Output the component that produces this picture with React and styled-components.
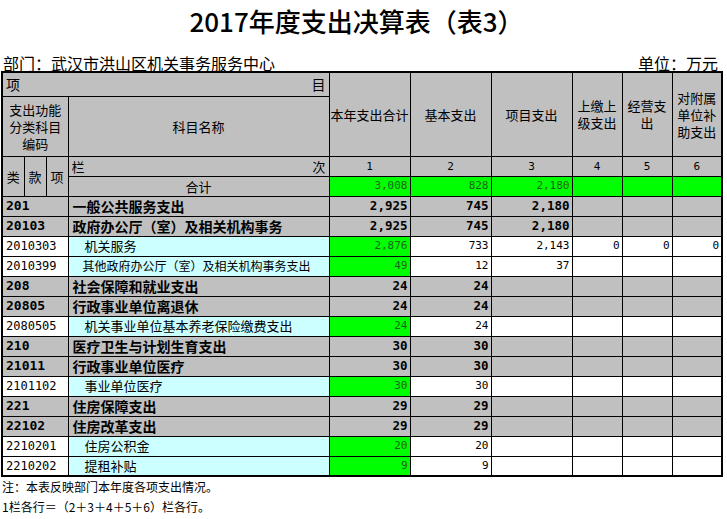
import React from 'react';
import styled, { createGlobalStyle } from 'styled-components';

const GRAY = '#c0c0c0';
const GREEN = '#00ff00';
const CYAN = '#ccffff';
const WHITE = '#ffffff';
const DARK_GREEN = '#1f5f1f';

const GlobalStyle = createGlobalStyle`
  body {
    margin: 0;
    background: #fff;
    color: #000;
    font-family: "Noto Sans CJK SC", sans-serif;
  }
`;

const Page = styled.div`
  width: 727px;
  padding-left: 1px;
`;

const Title = styled.h1`
  margin: 0;
  width: 711px;
  height: 42px;
  line-height: 42px;
  text-align: center;
  font-family: "Noto Sans CJK SC", sans-serif;
  font-size: 26px;
  font-weight: 500;
`;

const InfoRow = styled.div`
  display: flex;
  justify-content: space-between;
  align-items: flex-end;
  width: 717px;
  height: 29px;
  padding-left: 2px;
  box-sizing: border-box;
  font-size: 16px;
  line-height: 16px;
`;

const Sheet = styled.table`
  border-collapse: collapse;
  table-layout: fixed;
  width: 720px;
  border: 2px solid #000;
`;

const Row = styled.tr`
  height: ${(p) => p.$h || 20}px;
`;

const HeadCell = styled.td`
  border: 1px solid #000;
  background: ${GRAY};
  padding: 0;
  text-align: center;
  vertical-align: middle;
  white-space: nowrap;
  font-size: ${(p) => p.$size || 13}px;
  line-height: 17px;
  font-family: ${(p) => (p.$mono ? '"DejaVu Sans Mono", monospace' : '"Noto Sans CJK SC", sans-serif')};
  ${(p) => p.$mono && 'font-size: 11px;'}
`;

const Split = styled.div`
  display: flex;
  justify-content: space-between;
  padding: 0 3px 0 3px;
`;

const CodeCell = styled.td`
  border: 1px solid #000;
  background: ${(p) => (p.$bold ? GRAY : WHITE)};
  padding: 0 0 0 3px;
  white-space: nowrap;
  font-family: "DejaVu Sans Mono", monospace;
  font-size: ${(p) => (p.$bold ? 13 : 12)}px;
  font-weight: ${(p) => (p.$bold ? 700 : 400)};
  line-height: 18px;
`;

const NameCell = styled.td`
  border: 1px solid #000;
  background: ${(p) => (p.$bold ? GRAY : CYAN)};
  padding: 0 0 0 ${(p) => (p.$bold ? 4 : p.$indent || 16)}px;
  white-space: nowrap;
  overflow: hidden;
  font-size: ${(p) => p.$size || (p.$bold ? 14 : 13)}px;
  font-weight: ${(p) => (p.$bold ? 700 : 400)};
  line-height: 18px;
`;

const NumCell = styled.td`
  border: 1px solid #000;
  background: ${(p) => p.$bg};
  color: ${(p) => p.$color || '#000'};
  padding: 0 2px 0 0;
  text-align: right;
  white-space: nowrap;
  font-family: "DejaVu Sans Mono", monospace;
  font-size: ${(p) => (p.$bold ? 12.5 : 11)}px;
  font-weight: ${(p) => (p.$bold ? 700 : 400)};
  line-height: 18px;
`;

const Notes = styled.div`
  padding-left: 1px;
  font-size: 12px;
  line-height: 20px;
`;

const widths = [22, 22, 22, 261, 81, 81, 81, 50, 50, 50];

const rows = [
  { code: '201', name: '一般公共服务支出', top: true, v: ['2,925', '745', '2,180', '', '', ''] },
  { code: '20103', name: '政府办公厅（室）及相关机构事务', top: true, v: ['2,925', '745', '2,180', '', '', ''] },
  { code: '2010303', name: '机关服务', v: ['2,876', '733', '2,143', '0', '0', '0'] },
  { code: '2010399', name: '其他政府办公厅（室）及相关机构事务支出', size: 12, indent: 14, v: ['49', '12', '37', '', '', ''] },
  { code: '208', name: '社会保障和就业支出', top: true, v: ['24', '24', '', '', '', ''] },
  { code: '20805', name: '行政事业单位离退休', top: true, v: ['24', '24', '', '', '', ''] },
  { code: '2080505', name: '机关事业单位基本养老保险缴费支出', v: ['24', '24', '', '', '', ''] },
  { code: '210', name: '医疗卫生与计划生育支出', top: true, v: ['30', '30', '', '', '', ''] },
  { code: '21011', name: '行政事业单位医疗', top: true, v: ['30', '30', '', '', '', ''] },
  { code: '2101102', name: '事业单位医疗', v: ['30', '30', '', '', '', ''] },
  { code: '221', name: '住房保障支出', top: true, v: ['29', '29', '', '', '', ''] },
  { code: '22102', name: '住房改革支出', top: true, v: ['29', '29', '', '', '', ''] },
  { code: '2210201', name: '住房公积金', v: ['20', '20', '', '', '', ''] },
  { code: '2210202', name: '提租补贴', v: ['9', '9', '', '', '', ''] },
];

const totals = ['3,008', '828', '2,180', '', '', ''];

const cellBg = (row, i) => {
  if (row.top) return GRAY;
  return i === 0 ? GREEN : WHITE;
};

const App = () => {
  return (
    <Page>
      <GlobalStyle />
      <Title>2017年度支出决算表（表3）</Title>
      <InfoRow>
        <span>部门：武汉市洪山区机关事务服务中心</span>
        <span>单位：万元</span>
      </InfoRow>
      <Sheet>
        <colgroup>
          {widths.map((w, i) => (
            <col key={i} style={{ width: w }} />
          ))}
        </colgroup>
        <tbody>
          <Row $h={24}>
            <HeadCell colSpan={4} $size={14}>
              <Split>
                <span>项</span>
                <span>目</span>
              </Split>
            </HeadCell>
            <HeadCell rowSpan={2}>本年支出合计</HeadCell>
            <HeadCell rowSpan={2}>基本支出</HeadCell>
            <HeadCell rowSpan={2}>项目支出</HeadCell>
            <HeadCell rowSpan={2}>上缴上<br />级支出</HeadCell>
            <HeadCell rowSpan={2}>经营支<br />出</HeadCell>
            <HeadCell rowSpan={2}>对附属<br />单位补<br />助支出</HeadCell>
          </Row>
          <Row $h={60}>
            <HeadCell colSpan={3}>支出功能<br />分类科目<br />编码</HeadCell>
            <HeadCell>科目名称</HeadCell>
          </Row>
          <Row>
            <HeadCell rowSpan={2}>类</HeadCell>
            <HeadCell rowSpan={2}>款</HeadCell>
            <HeadCell rowSpan={2}>项</HeadCell>
            <HeadCell>
              <Split>
                <span>栏</span>
                <span>次</span>
              </Split>
            </HeadCell>
            {[1, 2, 3, 4, 5, 6].map((n) => (
              <HeadCell key={n} $mono>{n}</HeadCell>
            ))}
          </Row>
          <Row>
            <HeadCell>合计</HeadCell>
            {totals.map((t, i) => (
              <NumCell key={i} $bg={GREEN} $color={DARK_GREEN}>{t}</NumCell>
            ))}
          </Row>
          {rows.map((r) => (
            <Row key={r.code}>
              <CodeCell colSpan={3} $bold={r.top}>{r.code}</CodeCell>
              <NameCell $bold={r.top} $size={r.size} $indent={r.indent}>{r.name}</NameCell>
              {r.v.map((v, i) => (
                <NumCell
                  key={i}
                  $bg={cellBg(r, i)}
                  $bold={r.top}
                  $color={!r.top && i === 0 ? DARK_GREEN : '#000'}
                >
                  {v}
                </NumCell>
              ))}
            </Row>
          ))}
        </tbody>
      </Sheet>
      <Notes>
        <div>注：本表反映部门本年度各项支出情况。</div>
        <div>1栏各行＝（2＋3＋4＋5＋6）栏各行。</div>
      </Notes>
    </Page>
  );
};

export default App;
